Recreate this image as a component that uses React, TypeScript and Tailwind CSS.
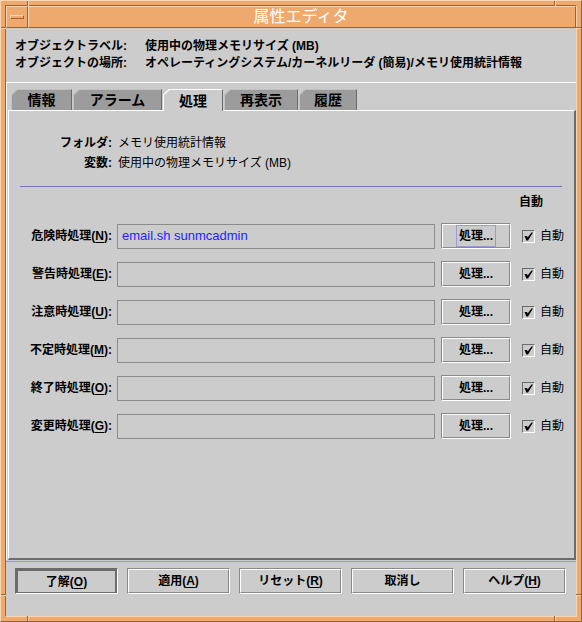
import React from "react";

function Mn({ c }: { c: string }) {
  return <span className="underline underline-offset-[2px]">{c}</span>;
}

function Corner({ line }: { line: string }) {
  return (
    <svg className="absolute -top-px -left-px" width="6" height="6" viewBox="0 0 6 6">
      <polygon points="0,0 6,0 0,6" fill="#cccccc" />
      <line x1="0" y1="6.5" x2="6.5" y2="0" stroke={line} strokeWidth="1.2" />
    </svg>
  );
}

function Tab({ label, cls, active }: { label: string; cls: string; active?: boolean }) {
  if (active) {
    return (
      <div
        className={`relative z-10 -mb-px flex h-[22px] items-center justify-center border-t border-l border-r border-t-white border-l-white border-r-[#6b6b6b] bg-[#cccccc] text-[14px] font-bold text-black ${cls}`}
      >
        <Corner line="#ffffff" />
        <span className="mt-[1px]">{label}</span>
      </div>
    );
  }
  return (
    <div
      className={`relative flex h-[21px] items-center justify-center border-t border-l border-r border-t-[#c2c2c2] border-l-[#c2c2c2] border-r-[#6b6b6b] bg-[#9c9c9c] text-[14px] font-bold text-black ${cls}`}
    >
      <Corner line="#c2c2c2" />
      <span className="mt-[1px]">{label}</span>
    </div>
  );
}

function Check() {
  return (
    <div className="ml-[11px] h-[13px] w-[13px] border border-t-[#6b6b6b] border-l-[#6b6b6b] border-b-white border-r-white bg-[#cccccc]">
      <svg width="11" height="11" viewBox="0 0 11 11" className="block">
        <polygon points="1.5,5 4,5 4.6,6.6 8.5,1.5 10,1.5 5,9.5 3.4,9.5" fill="#000" />
      </svg>
    </div>
  );
}

function EtchedButton({ children, cls }: { children: React.ReactNode; cls: string }) {
  return (
    <div
      className={`border border-t-[#8a8a8a] border-l-[#8a8a8a] border-b-white border-r-white ${cls}`}
    >
      <div className="flex h-full w-full items-center justify-center border border-t-white border-l-white border-b-[#8a8a8a] border-r-[#8a8a8a] text-[12px] font-bold text-black">
        {children}
      </div>
    </div>
  );
}

function Row({ label, m, value, focus }: { label: string; m: string; value?: string; focus?: boolean }) {
  return (
    <div className="flex h-[26px] items-center">
      <div className="w-[103px] text-right text-[12px] font-bold text-black">
        {label}(<Mn c={m} />):
      </div>
      <div className="ml-[5px] flex h-[25px] w-[318px] items-center border border-[#8c8c8c] pl-[4px] text-[13px] text-[#1f1fff]">
        {value}
      </div>
      <EtchedButton cls="ml-[6px] h-[26px] w-[70px]">
        <span className={focus ? "border border-[#9a9ad6] px-[2px] py-[1px]" : "border border-transparent px-[2px] py-[1px]"}>
          処理...
        </span>
      </EtchedButton>
      <Check />
      <span className="ml-[5px] text-[12px] text-black">自動</span>
    </div>
  );
}

export default function App() {
  return (
    <div className="h-[622px] w-[582px] overflow-hidden font-[family-name:'Liberation_Sans','Noto_Sans_CJK_JP',sans-serif]">
      <div className="relative h-[622px] w-[582px] border border-t-[#fcd6b2] border-l-[#fcd6b2] border-b-[#9c6232] border-r-[#9c6232] bg-[#eeaa6e] p-[4px]">
        {/* corner grooves */}
        <div className="absolute left-[26px] top-0 h-[5px] w-px bg-[#9c6232]" />
        <div className="absolute left-[27px] top-0 h-[5px] w-px bg-[#fcd6b2]" />
        <div className="absolute right-[26px] top-0 h-[5px] w-px bg-[#9c6232]" />
        <div className="absolute right-[25px] top-0 h-[5px] w-px bg-[#fcd6b2]" />
        <div className="absolute left-[26px] bottom-0 h-[5px] w-px bg-[#9c6232]" />
        <div className="absolute left-[27px] bottom-0 h-[5px] w-px bg-[#fcd6b2]" />
        <div className="absolute right-[26px] bottom-0 h-[5px] w-px bg-[#9c6232]" />
        <div className="absolute right-[25px] bottom-0 h-[5px] w-px bg-[#fcd6b2]" />
        <div className="absolute left-0 top-[26px] h-px w-[5px] bg-[#9c6232]" />
        <div className="absolute left-0 top-[27px] h-px w-[5px] bg-[#fcd6b2]" />
        <div className="absolute right-0 top-[26px] h-px w-[5px] bg-[#9c6232]" />
        <div className="absolute right-0 top-[27px] h-px w-[5px] bg-[#fcd6b2]" />
        <div className="absolute left-0 bottom-[26px] h-px w-[5px] bg-[#9c6232]" />
        <div className="absolute left-0 bottom-[25px] h-px w-[5px] bg-[#fcd6b2]" />
        <div className="absolute right-0 bottom-[26px] h-px w-[5px] bg-[#9c6232]" />
        <div className="absolute right-0 bottom-[25px] h-px w-[5px] bg-[#fcd6b2]" />

        <div className="flex h-full w-full flex-col border border-t-[#9c6232] border-l-[#9c6232] border-b-[#fcd6b2] border-r-[#fcd6b2]">
          {/* title bar */}
          <div className="flex h-[22px] shrink-0">
            <div className="flex h-[22px] w-[22px] items-center justify-center border border-t-[#fcd6b2] border-l-[#fcd6b2] border-b-[#9c6232] border-r-[#9c6232]">
              <div className="h-[4px] w-[14px] border border-t-[#fcd6b2] border-l-[#fcd6b2] border-b-[#9c6232] border-r-[#9c6232]" />
            </div>
            <div className="flex h-[22px] flex-1 items-center justify-center border border-t-[#fcd6b2] border-l-[#fcd6b2] border-b-[#9c6232] border-r-[#9c6232] text-[16px] text-white">
              <span className="-ml-[2px]">属性エディタ</span>
            </div>
          </div>

          {/* content */}
          <div className="flex flex-1 flex-col bg-[#cccccc]">
            <div className="pl-[9px] pt-[10px] text-[12px] font-bold leading-[17px] text-black">
              <div className="flex">
                <span className="w-[130px]">オブジェクトラベル:</span>
                <span>使用中の物理メモリサイズ (MB)</span>
              </div>
              <div className="flex">
                <span className="w-[130px]">オブジェクトの場所:</span>
                <span>オペレーティングシステム/カーネルリーダ (簡易)/メモリ使用統計情報</span>
              </div>
            </div>

            {/* panel */}
            <div className="mt-[10px] flex h-[478px] flex-col border-t border-l border-t-white border-l-white pt-[6px]">
              <div className="flex gap-[1px] pl-[4px]">
                <Tab label="情報" cls="w-[61px]" />
                <Tab label="アラーム" cls="w-[89px]" />
                <Tab label="処理" cls="w-[60px]" active />
                <Tab label="再表示" cls="w-[74px]" />
                <Tab label="履歴" cls="w-[58px]" />
              </div>
              <div className="ml-px flex flex-1 flex-col border-t border-l border-r-2 border-b-2 border-t-white border-l-white border-r-[#6b6b6b] border-b-[#6b6b6b]">
                <div className="pt-[22px] text-[12px] leading-[20px] text-black">
                  <div className="flex">
                    <span className="w-[103px] text-right font-bold">フォルダ:</span>
                    <span className="ml-[6px]">メモリ使用統計情報</span>
                  </div>
                  <div className="flex">
                    <span className="w-[103px] text-right font-bold">変数:</span>
                    <span className="ml-[6px]">使用中の物理メモリサイズ (MB)</span>
                  </div>
                </div>
                <div className="ml-[11px] mr-[12px] mt-[13px] h-px bg-[#7474b4]" />
                <div className="ml-[510px] mt-[5px] text-[12px] font-bold leading-[20px] text-black">自動</div>
                <div className="mt-[11px] flex flex-col gap-[12px]">
                  <Row label="危険時処理" m="N" value="email.sh sunmcadmin" focus />
                  <Row label="警告時処理" m="E" />
                  <Row label="注意時処理" m="U" />
                  <Row label="不定時処理" m="M" />
                  <Row label="終了時処理" m="O" />
                  <Row label="変更時処理" m="G" />
                </div>
              </div>
            </div>
            <div className="mt-[1px] h-px bg-[#9a9ac8]" />

            {/* bottom buttons */}
            <div className="mt-[6px] flex gap-[9px] pl-[9px] pr-[10px]">
              <div className="h-[26px] flex-1 border border-t-[#6b6b6b] border-l-[#6b6b6b] border-b-white border-r-white">
                <div className="flex h-full w-full items-center justify-center border-2 border-b border-[#6b6b6b] text-[12px] font-bold text-black">
                  了解(<Mn c="O" />)
                </div>
              </div>
              <EtchedButton cls="h-[26px] flex-1">
                適用(<Mn c="A" />)
              </EtchedButton>
              <EtchedButton cls="h-[26px] flex-1">
                リセット(<Mn c="R" />)
              </EtchedButton>
              <EtchedButton cls="h-[26px] flex-1">取消し</EtchedButton>
              <EtchedButton cls="h-[26px] flex-1">
                ヘルプ(<Mn c="H" />)
              </EtchedButton>
            </div>
          </div>
        </div>
      </div>
    </div>
  );
}
